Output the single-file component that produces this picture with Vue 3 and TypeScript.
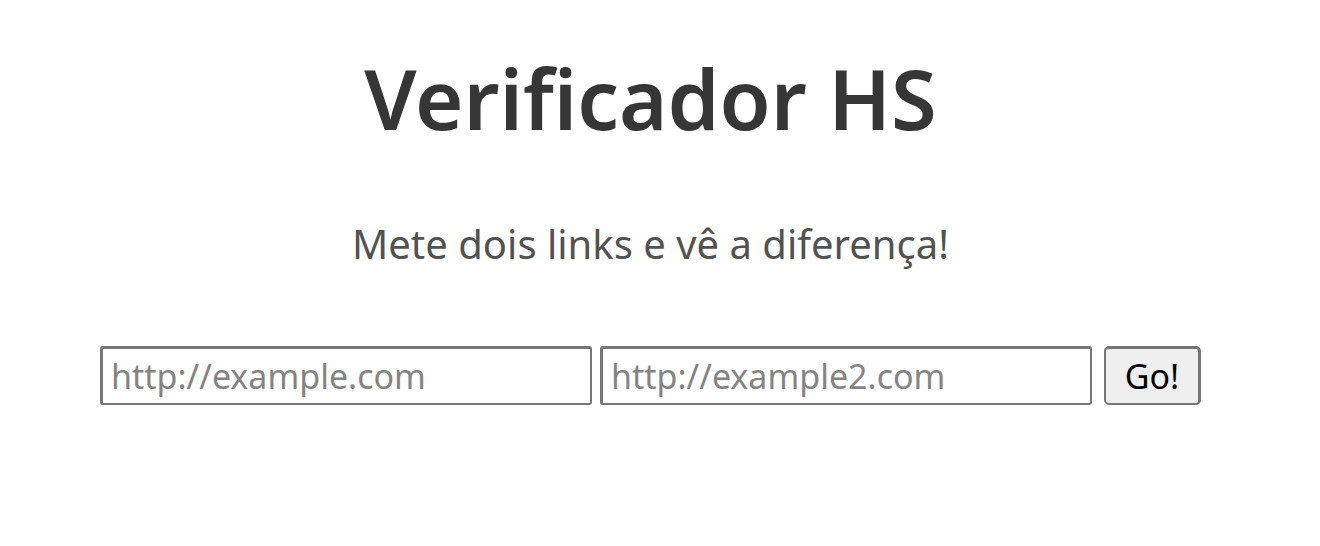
<script setup lang="ts">
import { ref } from 'vue'

const first = ref<string>('')
const second = ref<string>('')
</script>

<template>
  <main class="page">
    <h1 class="title">Verificador HS</h1>
    <p class="intro">Mete dois links e vê a diferença!</p>
    <form class="form" @submit.prevent>
      <input v-model="first" class="field" type="text" aria-label="Primeiro link" placeholder="http://example.com" />
      <input v-model="second" class="field" type="text" aria-label="Segundo link" placeholder="http://example2.com" />
      <button class="go" type="submit">Go!</button>
    </form>
  </main>
</template>

<style>
body {
  margin: 0;
  background: #fff;
}
</style>

<style scoped>
.page {
  box-sizing: border-box;
  max-width: 1320px;
  margin: 0 auto;
  padding: 38px 119px 40px 100px;
  font-family: "Noto Sans", "Open Sans", sans-serif;
  text-align: center;
}
.title {
  margin: 0;
  color: #363636;
  font-size: 83px;
  font-weight: 600;
  line-height: 120px;
}
.intro {
  margin: 56px 0 0;
  color: #525252;
  font-size: 40px;
  line-height: 60px;
}
.form {
  display: flex;
  margin-top: 72px;
}
.field {
  box-sizing: border-box;
  flex: 1;
  min-width: 0;
  height: 59px;
  margin: 0 8px 0 0;
  padding: 0 8px;
  border: solid #767676;
  border-width: 3px 2px 2px 3px;
  border-radius: 3px;
  background: #fff;
  color: #000;
  font: 34px/48px "Noto Sans", "Open Sans", sans-serif;
}
.field::placeholder {
  color: #848484;
  opacity: 1;
}
.go {
  box-sizing: border-box;
  width: 97px;
  height: 59px;
  margin-left: 4px;
  padding: 0;
  border: solid #767676;
  border-width: 3px 3px 2px 2px;
  border-radius: 5px;
  background: #efefef;
  color: #000;
  font: 34px/48px "Noto Sans", "Open Sans", sans-serif;
}
</style>
